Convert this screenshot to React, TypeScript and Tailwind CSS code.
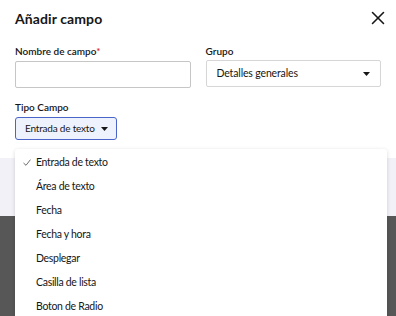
import { X } from "lucide-react";

const items = [
  "Entrada de texto",
  "Área de texto",
  "Fecha",
  "Fecha y hora",
  "Desplegar",
  "Casilla de lista",
  "Boton de Radio",
];

function Caret() {
  return (
    <svg width="7" height="4" viewBox="0 0 7 4" className="shrink-0">
      <path d="M0 0h7L3.5 4z" fill="#161616" />
    </svg>
  );
}

export default function App() {
  return (
    <div
      className="relative w-[396px] h-[316px] overflow-hidden bg-[#575757] text-[#161616]"
      style={{ fontFamily: "Lato, 'Liberation Sans', sans-serif" }}
    >
      <div className="bg-white h-[158px] px-[15px] pt-[8px]">
        <div className="flex items-center justify-between h-[20px]">
          <h1 className="text-[14px] font-bold tracking-[0.1px]">Añadir campo</h1>
          <X size={22} strokeWidth={1.7} className="-mr-[8px]" />
        </div>
        <div className="flex gap-[15px] mt-[16px]">
          <div className="w-[176px]">
            <p className="text-[10px] font-semibold leading-[14px]">
              Nombre de campo<span className="text-[#da1e28]">*</span>
            </p>
            <div className="mt-[3px] h-[27px] border border-[#c6c6c6] rounded-[2px] bg-white" />
          </div>
          <div className="w-[176px]">
            <p className="text-[10px] font-semibold leading-[14px]">Grupo</p>
            <div className="mt-[2px] h-[27px] border border-[#d6d6d6] rounded-[2px] bg-white flex items-center justify-between pl-[10px] pr-[10px]">
              <span className="text-[10.5px] tracking-[-0.15px] whitespace-nowrap">Detalles generales</span>
              <Caret />
            </div>
          </div>
        </div>
        <p className="mt-[12px] text-[10px] font-semibold leading-[14px]">Tipo Campo</p>
        <div className="mt-[3px] inline-flex h-[23px] border border-[#4a64c9] rounded-[3px] bg-[#eef2fd] items-center gap-[6px] pl-[9px] pr-[8px]">
          <span className="text-[10px] tracking-[-0.2px] whitespace-nowrap">Entrada de texto</span>
          <Caret />
        </div>
      </div>
      <div className="bg-[#f1f1f7] h-[58px]" />

      <div className="absolute left-[15px] top-[149px] w-[372px] h-[200px] bg-white rounded-[3px] shadow-[0_1px_4px_rgba(0,0,0,0.15)] pt-[1px]">
        {items.map((it, i) => (
          <div key={it} className="h-[24px] flex items-center text-[10.5px] tracking-[-0.3px] pl-[21px] whitespace-nowrap first:h-[25px]">
            <span className="w-[0px] relative">
              {i === 0 && (
                <svg width="8" height="7" viewBox="0 0 8 7" className="absolute -left-[13px] -top-[4px]">
                  <path d="M0.5 4 L3 6.3 L7.5 0.6" fill="none" stroke="#6f6f6f" strokeWidth="1" />
                </svg>
              )}
            </span>
            {it}
          </div>
        ))}
      </div>
    </div>
  );
}
